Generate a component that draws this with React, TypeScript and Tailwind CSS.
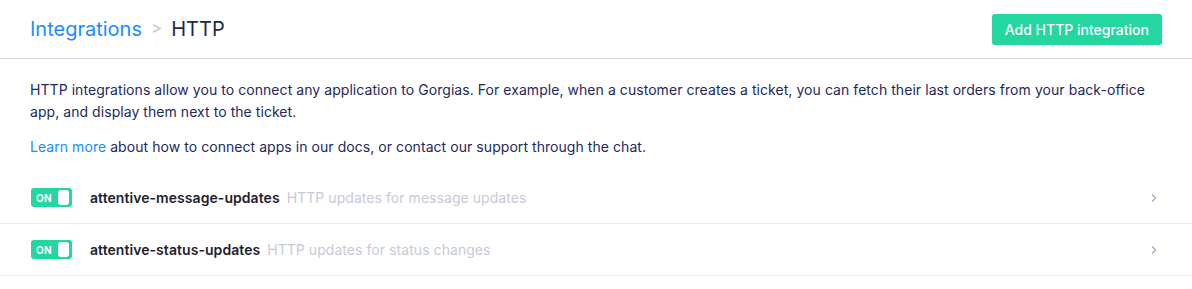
const rows = [
  { name: "attentive-message-updates", desc: "HTTP updates for message updates" },
  { name: "attentive-status-updates", desc: "HTTP updates for status changes" },
];

function Toggle() {
  return (
    <div className="flex items-center justify-between w-[41px] h-[19px] rounded-[3px] bg-[#24d69f] pl-[5px] pr-[3px]">
      <span className="text-[10px] font-bold text-white leading-none tracking-wide">ON</span>
      <span className="w-[11px] h-[15px] rounded-[3px] bg-white" />
    </div>
  );
}

export default function App() {
  return (
    <div className="w-[1192px] bg-white font-['Inter',sans-serif]">
      <div className="flex items-center justify-between h-[59px] px-[30px] border-b border-[#d6d6dc]">
        <div className="flex items-center text-[20px] leading-none pb-[1px]">
          <span className="text-[#1a8cff]">Integrations</span>
          <span className="text-[#c5c8d0] mx-[9px] text-[17px]">&gt;</span>
          <span className="text-[#202a4a]">HTTP</span>
        </div>
        <button className="h-[31px] px-[13px] rounded-[3px] bg-[#24d69f] text-white text-[14px] font-medium">
          Add HTTP integration
        </button>
      </div>
      <div className="px-[30px] pt-[20px] text-[14px] leading-[22px] text-[#232a5e] tracking-[0.004em]">
        <p>
          HTTP integrations allow you to connect any application to Gorgias. For example, when a customer creates a ticket, you can fetch their last orders from your back-office app, and display them next to the ticket.
        </p>
        <p className="mt-[13px]">
          <a className="text-[#1a8cff]">Learn more</a> about how to connect apps in our docs, or contact our support through the chat.
        </p>
      </div>
      <div className="mt-[14px]">
        {rows.map((r) => (
          <div key={r.name} className="flex items-center h-[52px] pl-[31px] pr-[34px] border-b border-[#ebebef]">
            <Toggle />
            <span className="ml-[18px] text-[14px] font-semibold text-[#1f2230] tracking-[0.004em]">{r.name}</span>
            <span className="ml-[7px] text-[14px] text-[#c9c9d8] tracking-[0.004em]">{r.desc}</span>
            <svg className="ml-auto" width="8" height="10" viewBox="0 0 8 10" fill="none">
              <path d="M2 1.5 L5.5 5 L2 8.5" stroke="#a9a9c4" strokeWidth="1.4" />
            </svg>
          </div>
        ))}
      </div>
    </div>
  );
}
